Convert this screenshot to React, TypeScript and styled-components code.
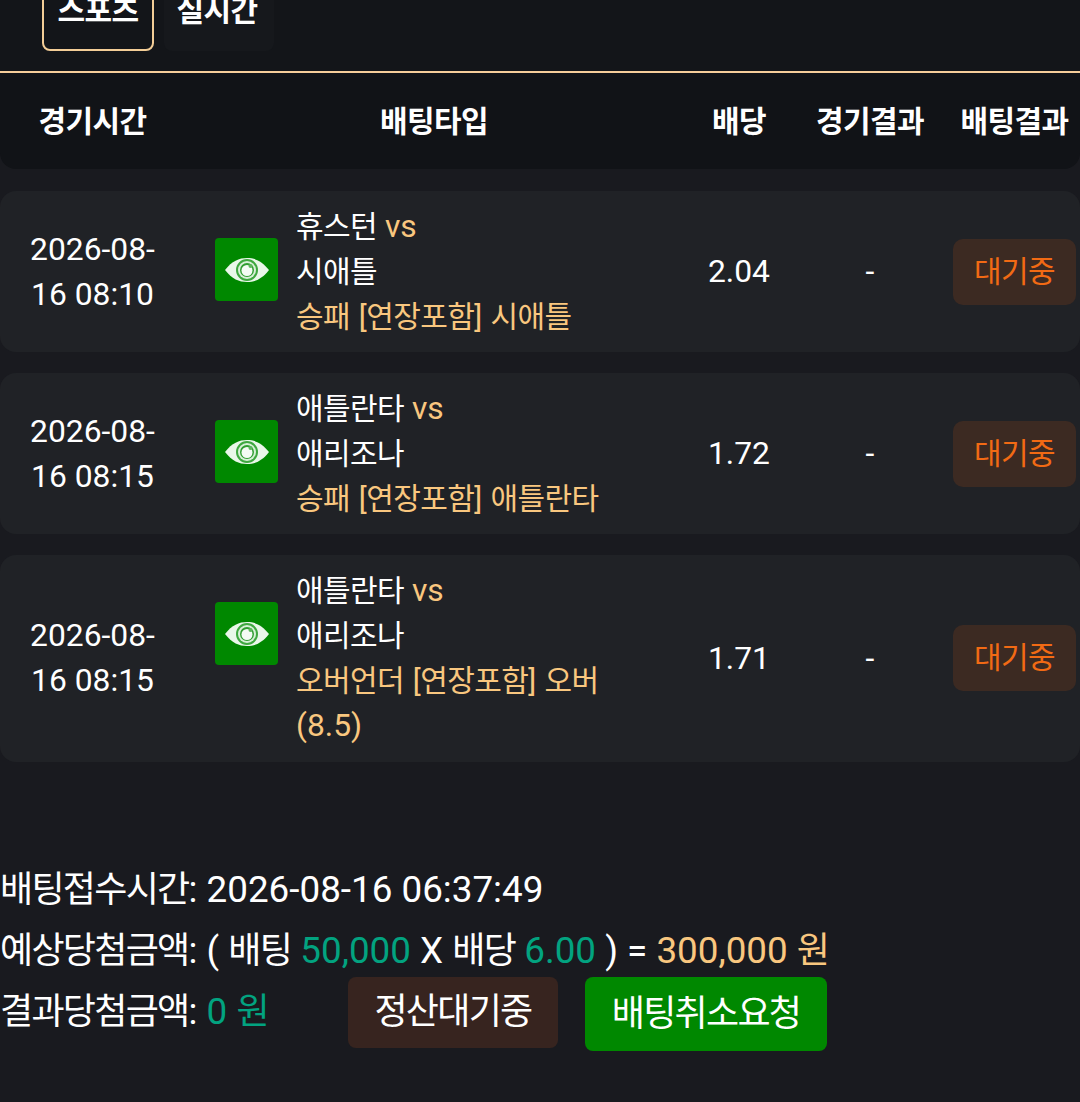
import React from "react"
import styled, { createGlobalStyle } from "styled-components"

const accent = "#f9c77f"
const teal = "#02a380"

const GlobalStyle = createGlobalStyle`
  html, body {
    margin: 0;
    background: #191a1f;
    color: #fff;
    font-family: Roboto, "Noto Sans CJK KR", sans-serif;
  }
`

const Page = styled.div`
  height: 1102px;
  overflow: hidden;
`

const TopBar = styled.div`
  background: #131519;
  height: 71px;
  border-bottom: 2px solid #f6cd9a;
  overflow: hidden;
`

const Tabs = styled.div`
  display: flex;
  gap: 10px;
  margin: -15px 0 0 42px;
`

const Tab = styled.div<{ $active?: boolean }>`
  box-sizing: border-box;
  width: ${(p) => (p.$active ? "112px" : "110px")};
  height: 66px;
  padding: 5px ${(p) => (p.$active ? "0" : "4px")} 0 0;
  text-align: center;
  font-size: 32px;
  line-height: 36px;
  font-weight: 700;
  border-radius: 8px;
  border: 2px solid ${(p) => (p.$active ? "#f3cd97" : "transparent")};
  background: ${(p) => (p.$active ? "transparent" : "#16181c")};
`

/* hangul in the shot is narrower than the roboto size next to it */
const Ko = styled.span`
  font-size: 30px;
  line-height: 1;
  letter-spacing: -0.6px;
  word-spacing: 2px;
`

const Columns = "185px 498px 112px 150px 135px"

const Head = styled.div`
  display: grid;
  grid-template-columns: ${Columns};
  height: 96px;
  margin-bottom: 22px;
  align-items: center;
  background: #111317;
  border-radius: 0 0 16px 16px;
  font-size: 32px;
  line-height: 40px;
  font-weight: 700;
  text-align: center;
`

const HeadLast = styled.div`
  padding-left: 4px;
`

const Row = styled.div`
  display: grid;
  grid-template-columns: ${Columns};
  align-items: center;
  margin-bottom: 21px;
  padding: 13.1px 0;
  background: #202226;
  border-radius: 16px;
  font-size: 31.8px;
  line-height: 45px;
  text-align: center;
`

const TimeCell = styled.div`
  padding: 0 20px;
`

const TypeCell = styled.div`
  display: flex;
  gap: 18px;
  padding-left: 30px;
  text-align: left;
  align-self: start;
`

const EyeBox = styled.div`
  flex: none;
  width: 63px;
  height: 63px;
  margin-top: 34px;
  display: flex;
  align-items: center;
  justify-content: center;
  background: #008800;
  border-radius: 4px;
`

const Teams = styled.div`
  width: 310px;
`

const Accent = styled.span`
  color: ${accent};
`

const Teal = styled.span`
  color: ${teal};
`

const Badge = styled.div`
  width: 123px;
  height: 66px;
  margin-left: 8px;
  display: flex;
  align-items: center;
  justify-content: center;
  background: #3c2a22;
  color: #f26a14;
  border-radius: 10px;
`

const Summary = styled.div`
  margin-top: 97px;
  font-size: 36.8px;
  line-height: 61px;

  ${Ko} {
    font-size: 36px;
    letter-spacing: -1.7px;
  }
`

const SummaryRow = styled.div`
  display: flex;
  align-items: center;
  height: 61px;
`

const SummaryLabel = styled.div`
  flex: 0 0 348px;
`

const Actions = styled.div`
  display: flex;
  align-items: flex-start;
  gap: 27px;
  margin-top: 5px;
`

const ActionButton = styled.div<{ $green?: boolean }>`
  display: flex;
  align-items: center;
  justify-content: center;
  width: ${(p) => (p.$green ? "242px" : "210px")};
  height: ${(p) => (p.$green ? "74px" : "71px")};
  background: ${(p) => (p.$green ? "#008800" : "#37241f")};
  border-radius: 8px;
`

const Eye = () => (
  <svg width="46" height="28" viewBox="0 0 46 28">
    <path d="M1 14C8 5 15 2 23 2s15 3 22 12c-7 9-14 12-22 12S8 23 1 14z" fill="#e9f7e9" />
    <circle cx="23" cy="14" r="11" fill="#3ea83f" />
    <circle cx="23" cy="14" r="9" fill="#d8f0d8" />
    <circle cx="23" cy="14" r="7" fill="#2f9d30" />
    <circle cx="23" cy="14.5" r="5.5" fill="#f4fbf4" />
    <circle cx="26.5" cy="10" r="2" fill="#5cb65c" />
  </svg>
)

type Bet = {
  time: string
  home: string
  away: string
  pick: React.ReactNode
  odds: string
}

const bets: Bet[] = [
  {
    time: "2026-08-16 08:10",
    home: "휴스턴",
    away: "시애틀",
    pick: <Ko>승패 [연장포함] 시애틀</Ko>,
    odds: "2.04",
  },
  {
    time: "2026-08-16 08:15",
    home: "애틀란타",
    away: "애리조나",
    pick: <Ko>승패 [연장포함] 애틀란타</Ko>,
    odds: "1.72",
  },
  {
    time: "2026-08-16 08:15",
    home: "애틀란타",
    away: "애리조나",
    pick: (
      <>
        <Ko>오버언더 [연장포함] 오버</Ko> (8.5)
      </>
    ),
    odds: "1.71",
  },
]

export default function App() {
  return (
    <Page>
      <GlobalStyle />
      <TopBar>
        <Tabs>
          <Tab $active><Ko>스포츠</Ko></Tab>
          <Tab><Ko>실시간</Ko></Tab>
        </Tabs>
      </TopBar>
      <Head>
        <div><Ko>경기시간</Ko></div>
        <div><Ko>배팅타입</Ko></div>
        <div><Ko>배당</Ko></div>
        <div><Ko>경기결과</Ko></div>
        <HeadLast><Ko>배팅결과</Ko></HeadLast>
      </Head>
      {bets.map((bet, i) => (
        <Row key={i}>
          <TimeCell>{bet.time}</TimeCell>
          <TypeCell>
            <EyeBox><Eye /></EyeBox>
            <Teams>
              <div><Ko>{bet.home}</Ko> <Accent>vs</Accent></div>
              <div><Ko>{bet.away}</Ko></div>
              <Accent>{bet.pick}</Accent>
            </Teams>
          </TypeCell>
          <div>{bet.odds}</div>
          <div>-</div>
          <Badge><Ko>대기중</Ko></Badge>
        </Row>
      ))}
      <Summary>
        <div><Ko>배팅접수시간</Ko>: 2026-08-16 06:37:49</div>
        <div>
          <Ko>예상당첨금액</Ko>: ( <Ko>배팅</Ko> <Teal>50,000</Teal> X <Ko>배당</Ko> <Teal>6.00</Teal> ) ={" "}
          <Accent>300,000 <Ko>원</Ko></Accent>
        </div>
        <SummaryRow>
          <SummaryLabel><Ko>결과당첨금액</Ko>: <Teal>0 <Ko>원</Ko></Teal></SummaryLabel>
          <Actions>
            <ActionButton><Ko>정산대기중</Ko></ActionButton>
            <ActionButton $green><Ko>배팅취소요청</Ko></ActionButton>
          </Actions>
        </SummaryRow>
      </Summary>
    </Page>
  )
}
